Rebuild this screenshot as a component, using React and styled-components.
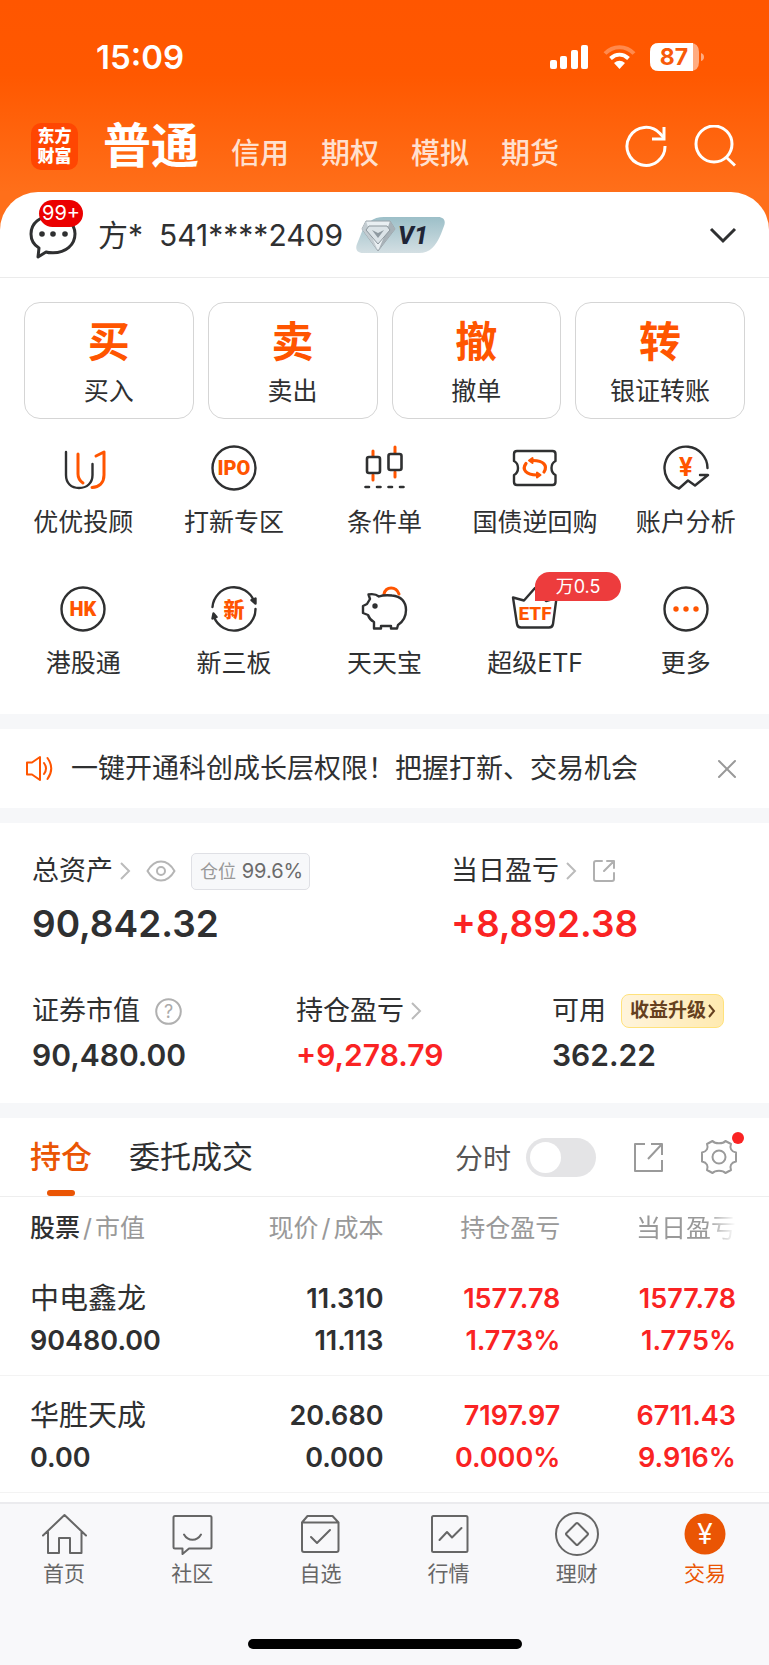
import React, { useState } from 'react'
import styled, { createGlobalStyle } from 'styled-components'

const GlobalStyle = createGlobalStyle`
  * {
    box-sizing: border-box;
  }
  body {
    margin: 0;
    background: #fff;
    font-family: Inter, "Noto Sans CJK SC", sans-serif;
    color: #2f3031;
  }
  button {
    font: inherit;
    color: inherit;
    border: none;
    background: none;
    padding: 0;
    cursor: pointer;
  }
  a {
    color: inherit;
    text-decoration: none;
  }
  svg {
    display: block;
    flex: none;
  }
`

const Page = styled.div`
  min-height: 100vh;
  display: flex;
  flex-direction: column;
  background: linear-gradient(#ff5600 0, #ff5800 75px, #ff6f1a 192px) top / 100% 240px no-repeat, #fff;
`

/* status bar */

const StatusBar = styled.div`
  display: flex;
  align-items: center;
  justify-content: space-between;
  padding: 40px 65px 0 96px;
  color: #fff;
`

const Clock = styled.span`
  font-size: 33px;
  line-height: 34px;
  font-weight: 600;
`

const StatusIcons = styled.div`
  display: flex;
  align-items: center;
  gap: 14px;
`

/* top navigation */

const TopBar = styled.header`
  display: flex;
  align-items: center;
  padding: 46px 33px 20px 31px;
  color: #fff;
`

const Logo = styled.div`
  width: 47px;
  height: 47px;
  border-radius: 10px;
  background: #ff4602;
  display: flex;
  flex-direction: column;
  align-items: center;
  justify-content: center;
  font-size: 17px;
  line-height: 20px;
  font-weight: 900;
`

const Markets = styled.nav`
  flex: 1;
  display: flex;
  align-items: flex-end;
  gap: 32px;
  margin-left: 25px;
`

const Market = styled.button`
  font-size: ${(p) => (p.$active ? '48px' : '29px')};
  line-height: ${(p) => (p.$active ? '52px' : '36px')};
  font-weight: ${(p) => (p.$active ? 700 : 500)};
  color: ${(p) => (p.$active ? '#fff' : '#ffe0cf')};
`

const TopActions = styled.div`
  display: flex;
  gap: 27px;
`

/* white sheet */

const Sheet = styled.main`
  flex: 1;
  display: flex;
  flex-direction: column;
  background: #fff;
  border-radius: 38px 38px 0 0;
`

const Account = styled.div`
  display: flex;
  align-items: center;
  padding: 18px 32px 17px 28px;
  border-bottom: 1px solid #ebebeb;
  font-size: 30px;
  line-height: 50px;

  .id {
    margin: 0 13px 0 16px;
  }
  .fold {
    margin-left: auto;
  }
`

const Messages = styled.button`
  position: relative;
  margin-right: 20px;
`

const Count = styled.span`
  position: absolute;
  left: 11px;
  top: -10px;
  padding: 0 3px;
  border-radius: 14px;
  background: #eb0000;
  color: #fff;
  font-size: 20px;
  line-height: 27px;
`

const Trades = styled.div`
  display: grid;
  grid-template-columns: repeat(4, 1fr);
  gap: 14px;
  padding: 24px 24px 0;
`

const Trade = styled.button`
  border: 1px solid #d5d5d5;
  border-radius: 16px;
  padding: 16px 0 11px;
  font-size: 25px;
  line-height: 32px;

  b {
    display: block;
    margin-bottom: 10px;
    font-size: 42px;
    line-height: 46px;
    font-weight: 700;
    color: #ff5500;
  }
`

const Services = styled.div`
  display: grid;
  grid-template-columns: repeat(5, 1fr);
  row-gap: 48px;
  padding: 25px 8px 36px;
`

const Service = styled.a`
  display: flex;
  flex-direction: column;
  align-items: center;
  gap: 15px;
  font-size: 25px;
  line-height: 30px;
  white-space: nowrap;
`

const IconBox = styled.span`
  position: relative;
`

const Promo = styled.span`
  position: absolute;
  left: 24px;
  top: -13px;
  width: 86px;
  border-radius: 15px 15px 15px 0;
  background: #ed3c3d;
  color: #fff;
  font-size: 18px;
  line-height: 29px;
  text-align: center;
`

const Band = styled.div`
  height: 15px;
  background: #f6f7f9;
`

const Notice = styled.div`
  display: flex;
  align-items: center;
  gap: 17px;
  padding: 0 32px 0 25px;
  font-size: 27px;
  line-height: 79px;

  button {
    margin-left: auto;
  }
`

/* assets */

const Assets = styled.section`
  padding: 29px 32px 31px;
`

const AssetRow = styled.div`
  display: grid;
  grid-template-columns: ${(p) => p.$columns};

  & + & {
    margin-top: 46px;
  }
`

const AssetLabel = styled.div`
  display: flex;
  align-items: center;
  gap: 15px;
  font-size: 27px;
  line-height: 38px;
  white-space: nowrap;
`

const AssetLink = styled.a`
  display: flex;
  align-items: center;
  gap: 6px;
`

const Amount = styled.div`
  margin-top: ${(p) => (p.$large ? 12 : 8)}px;
  font-size: ${(p) => (p.$large ? 37 : 30)}px;
  line-height: ${(p) => (p.$large ? 44 : 34)}px;
  font-weight: 600;
  color: ${(p) => (p.$up ? '#fa2323' : '#2f3031')};
`

const Ratio = styled.span`
  padding: 0 6px 0 8px;
  border: 1px solid #dfe0e5;
  border-radius: 5px;
  background: #f7f8fa;
  font-size: 20px;
  line-height: 34px;
  color: #6b6b6b;

  span {
    font-size: 18px;
    color: #999;
  }
`

const Upgrade = styled.button`
  padding: 0 7px 0 8px;
  display: flex;
  align-items: center;
  gap: 2px;
  border: 1px solid #ffe27c;
  border-radius: 8px;
  background: linear-gradient(90deg, #fff4dc, #ffeab0);
  color: #65401f;
  font-size: 19px;
  line-height: 32px;
  font-weight: 700;
`

/* positions */

const Tabs = styled.div`
  display: flex;
  align-items: center;
  padding: 0 32px 0 30px;
  border-bottom: 1px solid #eee;
`

const Tab = styled.button`
  position: relative;
  margin-right: 37px;
  font-size: 31px;
  line-height: 78px;
  font-weight: ${(p) => (p.$active ? 500 : 400)};
  color: ${(p) => (p.$active ? '#ea5504' : '#2f3031')};

  &::after {
    content: '';
    display: ${(p) => (p.$active ? 'block' : 'none')};
    position: absolute;
    left: calc(50% - 14px);
    bottom: 0;
    width: 28px;
    height: 6px;
    border-radius: 3px;
    background: #ea5504;
  }
`

const Toggle = styled.label`
  display: flex;
  align-items: center;
  gap: 15px;
  margin-left: auto;
  font-size: 28px;
  color: #555;

  input {
    appearance: none;
    display: flex;
    align-items: center;
    margin: 0;
    padding: 0 4px;
    width: 70px;
    height: 39px;
    border-radius: 20px;
    background: #e4e4e6;
    cursor: pointer;
  }
  input::before {
    content: '';
    width: 31px;
    height: 31px;
    border-radius: 50%;
    background: #fff;
  }
  input:checked {
    justify-content: flex-end;
    background: #ea5504;
  }
`

const ToolButton = styled.button`
  position: relative;
  margin-left: 37px;
`

const Dot = styled.i`
  position: absolute;
  right: -7px;
  top: -7px;
  width: 12px;
  height: 12px;
  border-radius: 50%;
  background: #fa2323;
`

const Positions = styled.table`
  width: 100%;
  table-layout: fixed;
  border-collapse: separate;
  border-spacing: 0;
  text-align: right;

  th {
    height: 62px;
    padding: 0 1px 0 0;
    font-size: 25px;
    line-height: 30px;
    font-weight: 400;
    color: #999;
    white-space: nowrap;
  }
  th b {
    font-weight: 500;
    color: #2f3031;
  }
  th i {
    margin: 0 3px;
    font-style: normal;
  }
  td {
    padding: 19px 1px 13px 0;
    border-bottom: 1px solid #f3f3f3;
    font-size: 27px;
    line-height: 42px;
    font-weight: 600;
  }
  th:first-child,
  td:first-child {
    width: 28%;
    padding-left: 30px;
    text-align: left;
  }
  th:nth-child(2) {
    width: 22%;
  }
  th:nth-child(3) {
    width: 23%;
  }
  th:last-child,
  td:last-child {
    width: 27%;
    padding-right: 33px;
  }
`

const Faded = styled.span`
  mask-image: linear-gradient(90deg, #000 70%, transparent);
`

const StockName = styled.a`
  display: block;
  font-size: 29px;
  font-weight: 400;
`

const Figure = styled.div`
  color: ${(p) => (p.$up ? '#fa2323' : '#2f3031')};
`

/* bottom bar */

const BottomBar = styled.footer`
  border-top: 2px solid #ebebee;
  background: #f8f8fa;
  padding: 6px 0 16px;
`

const BottomNav = styled.nav`
  display: grid;
  grid-template-columns: repeat(6, 1fr);
`

const BottomLink = styled.a`
  display: flex;
  flex-direction: column;
  align-items: center;
  gap: 2px;
  font-size: 21px;
  line-height: 28px;
  color: ${(p) => (p.$active ? '#ea5504' : '#666')};
`

const HomeIndicator = styled.div`
  width: 274px;
  height: 10px;
  margin: 51px auto 0;
  border-radius: 5px;
  background: #000;
`

/* icons */

const ORANGE = '#ff5500'
const DARK = '#2f3031'

const Icon = ({ size = 48, color = DARK, width = 2, children, ...rest }) => (
  <svg
    width={size}
    height={size}
    viewBox={`0 0 ${size} ${size}`}
    fill="none"
    stroke={color}
    strokeWidth={width}
    strokeLinecap="round"
    strokeLinejoin="round"
    aria-hidden="true"
    {...rest}
  >
    {children}
  </svg>
)

const IconText = ({ size, y, children, fill = ORANGE, weight = 900, family = 'Roboto' }) => (
  <text
    x="24"
    y={y}
    textAnchor="middle"
    fontFamily={`${family}, "Noto Sans CJK SC", sans-serif`}
    fontSize={size}
    fontWeight={weight}
    fill={fill}
    stroke="none"
  >
    {children}
  </text>
)

const Signal = () => (
  <svg width="39" height="26" viewBox="0 0 39 26" fill="#fff" aria-hidden="true">
    <rect x="0" y="16" width="7" height="9" rx="2" />
    <rect x="10" y="12" width="7" height="13" rx="2" />
    <rect x="21" y="6" width="7" height="19" rx="2" />
    <rect x="31" y="1" width="7" height="24" rx="2" />
  </svg>
)

const Wifi = () => (
  <svg width="33" height="26" viewBox="0 0 33 26" fill="none" stroke="#fff" strokeWidth="4" aria-hidden="true">
    <path d="M2 9.500C10 1 23 1 31 9.500" opacity=".3" />
    <path d="M7.500 14.500C13 9.500 20 9.500 25.500 14.500" />
    <path d="M11 19Q16.500 14.500 22 19L16.500 25Z" fill="#fff" stroke="none" />
  </svg>
)

const Battery = () => (
  <svg width="54" height="28" viewBox="0 0 54 28" aria-hidden="true">
    <path d="M9 0h31q9 0 9 9v10q0 9-9 9H9q-9 0-9-9V9q0-9 9-9z" fill="#fff" opacity=".5" />
    <path d="M9 0h34v28H9q-9 0-9-9V9q0-9 9-9z" fill="#fff" />
    <path d="M51 10q3 1 3 4t-3 4z" fill="#fff" opacity=".5" />
    <text x="24" y="22" textAnchor="middle" fontFamily="Inter, sans-serif" fontSize="23" fontWeight="700" fill="#f85a08">
      87
    </text>
  </svg>
)

const RefreshIcon = () => (
  <Icon size={42} color="#fff" width={3} strokeLinecap="butt" strokeLinejoin="miter">
    <path d="M40 21A19 19 0 1 1 35 8.500L39 13" />
    <path d="M39 2v12H27" />
  </Icon>
)

const SearchIcon = () => (
  <Icon size={42} color="#fff" width={3} strokeLinecap="butt">
    <circle cx="20" cy="19" r="18" />
    <path d="M32 32l9 8.500" />
  </Icon>
)

const BubbleIcon = () => (
  <Icon size={50} width={3}>
    <path d="M24.500 6C12 6 3 13 3 24c0 7 3 11 8 14l-1 9 8-5c2 .8 4 .8 7 .8 13 0 22-8 22-19C47 13 37 6 24.500 6z" />
    <g fill={DARK} stroke="none">
      <circle cx="14" cy="24" r="2.800" />
      <circle cx="25" cy="24" r="2.800" />
      <circle cx="37" cy="24" r="2.800" />
    </g>
  </Icon>
)

const VipBadge = () => (
  <svg width="90" height="38" viewBox="0 0 90 38" aria-label="V1">
    <defs>
      <linearGradient id="vip" x1="0" y1="0" x2="0" y2="1">
        <stop offset="0" stopColor="#9cbfc8" />
        <stop offset="1" stopColor="#d3dfe3" />
      </linearGradient>
    </defs>
    <path d="M28 1h54c6 0 8 4 6 9l-3 8c-5 12-11 19-22 19H7c-6 0-8-4-6-9l4-10C9 7 17 1 28 1z" fill="url(#vip)" />
    <path d="M10 5h24l5 8-17 22L6 13z" fill="#e9eff2" stroke="#98a2a8" strokeWidth="1" />
    <path d="M10 5l3 9 9 21L6 13z" fill="#c3ccd1" />
    <path d="M34 5l-3 9-9 21 17-22z" fill="#a7b1b7" />
    <path d="M13 10h18l3 4-12 14-12-14z" fill="#dbe3e7" stroke="#8d979d" strokeWidth="1" />
    <path d="M16 14l6 3 6-3-6 8z" fill="#8f9aa1" />
    <text x="42" y="28" fontFamily="Roboto, sans-serif" fontSize="25" fontWeight="800" fontStyle="italic" fill="#1f2536">
      V1
    </text>
  </svg>
)

const AdvisorIcon = () => (
  <Icon width={2.4}>
    <path d="M7 8v23c0 8 5 13 13 13s13.500-5 13.500-13V20" />
    <g stroke={ORANGE} strokeWidth="3">
      <path d="M19 10v20c0 4 2 7 5 9" />
      <path d="M37 12l8-4v23c0 8-5 12-12 12.500" />
    </g>
  </Icon>
)

const IpoIcon = () => (
  <Icon width={2.4}>
    <circle cx="24" cy="24" r="21.500" />
    <IconText size={20} y={31}>IPO</IconText>
  </Icon>
)

const CandleIcon = () => (
  <Icon width={2.6}>
    <g stroke={ORANGE} strokeWidth="3">
      <path d="M13 7v5M13 31v5M35 3v6M35 28v5" />
    </g>
    <rect x="7" y="13" width="13" height="16" rx="2" />
    <rect x="28.500" y="10" width="13" height="16" rx="2" />
    <path d="M5.500 43h3.500M17 43h3.500M28.500 43h3.500M40 43h3.500" />
  </Icon>
)

const RepoIcon = () => (
  <Icon width={2.4}>
    <path d="M6 7h35.500q3 0 3 3v7q-4 2-4 7t4 7v7q0 3-3 3H6q-3 0-3-3v-7q4-2 4-7t-4-7v-7q0-3 3-3z" />
    <g stroke={ORANGE} strokeWidth="3.200">
      <path d="M15 19.500c-4.500 6 0 11.500 11 11.500" />
      <path d="M33 28c4-6.500-.5-11.500-11-11.500" />
      <path d="M26 28.500v5l3.500-2.500zM21.500 14v5L18 16.500z" fill={ORANGE} strokeWidth="2" />
    </g>
  </Icon>
)

const AnalysisIcon = () => (
  <Icon width={2.4}>
    <path d="M45.500 24A21.500 21.500 0 1 0 17 44.500l9-8 7 5L46 31h-8" />
    <IconText size={25} y={32} weight={700} family="Inter">¥</IconText>
  </Icon>
)

const HkIcon = () => (
  <Icon width={2.4}>
    <circle cx="24" cy="24" r="21.500" />
    <IconText size={20} y={31}>HK</IconText>
  </Icon>
)

const NewBoardIcon = () => (
  <Icon width={2.4}>
    <path d="M2.500 22A21.500 21.500 0 0 1 44 16" />
    <path d="M45.500 24A21.500 21.500 0 0 1 4 32" />
    <path d="M41.500 15l4-1.500v5zM6.500 32l-4 1.500 1-5z" fill={DARK} />
    <IconText size={21} y={32}>新</IconText>
  </Icon>
)

const PiggyIcon = () => (
  <Icon width={2.4}>
    <path d="M24 9c2-8 12-8 15 0" stroke={ORANGE} strokeWidth="3" />
    <path d="M8.500 9.500c5-1 8 0 10.500 2 4-1.500 9-1.500 13-1C41 11 46 17 46 25c0 7-3.500 12-8 15l-1 3.500h-6V41H21v2.500h-7V37c-3-1.500-5-4-6-7l-5-2v-7l4-2 3-5z" />
    <circle cx="15" cy="21" r="2.700" fill={DARK} stroke="none" />
  </Icon>
)

const EtfIcon = () => (
  <Icon width={2.4}>
    <path d="M2 12.500l11 3L24 3l11 13 10.500-3-3.500 26q-.5 3.500-4 3.500H10q-3.500 0-4-3.500z" />
    <IconText size={19} y={35} weight={800}>ETF</IconText>
  </Icon>
)

const MoreIcon = () => (
  <Icon width={2.4}>
    <circle cx="24" cy="24" r="21.500" />
    <g fill={ORANGE} stroke="none">
      <circle cx="14" cy="24" r="2.700" />
      <circle cx="24" cy="24" r="2.700" />
      <circle cx="34" cy="24" r="2.700" />
    </g>
  </Icon>
)

const SpeakerIcon = () => (
  <Icon size={29} color={ORANGE}>
    <path d="M2 8.500h5l8-5.500v23l-8-5.500H2z" />
    <path d="M19 9q4 5.500 0 11M22.500 4q7.500 10.500 0 21" />
  </Icon>
)

const CloseIcon = () => (
  <Icon size={20} color="#999">
    <path d="M2 2l16 16M18 2L2 18" />
  </Icon>
)

const Arrow = () => (
  <svg width="12" height="18" viewBox="0 0 12 18" fill="none" stroke="#bbb" strokeWidth="2" aria-hidden="true">
    <path d="M2 1l8 8-8 8" />
  </svg>
)

const EyeIcon = () => (
  <Icon size={30} color="#b5b5b5">
    <path d="M1.500 15Q7 5.500 15 5.500T28.500 15Q23 24.500 15 24.500T1.500 15z" />
    <circle cx="15" cy="15" r="4" />
  </Icon>
)

const ShareIcon = () => (
  <Icon size={24} color="#b0b0b0">
    <path d="M10 2H4q-2 0-2 2v16q0 2 2 2h16q2 0 2-2v-6M15 2h7v7M21 3l-9 9" />
  </Icon>
)

const HelpIcon = () => (
  <Icon size={27} color="#b0b0b0">
    <circle cx="13.500" cy="13.500" r="12.300" />
    <text x="13.500" y="20" textAnchor="middle" fontFamily="Inter, sans-serif" fontSize="18" fill="#aaa" stroke="none">
      ?
    </text>
  </Icon>
)

const ExpandIcon = () => (
  <Icon size={31} color="#9a9a9a" strokeLinecap="butt">
    <path d="M12 2H2v27h27V18M18 2h11v11M29 2L15 17" />
  </Icon>
)

const GearIcon = () => (
  <Icon size={36} color="#9a9a9a">
    <path d="M11.500 2C14 5 22 5 24.500 2L30 5c-1.500 4 0 7.500 5 8.500v9c-5 1-6.500 4.500-5 8.500l-5.500 3c-2.500-3-10.500-3-13 0L6 31c1.500-4 0-7.500-5-8.500v-9c5-1 6.500-4.500 5-8.500z" />
    <circle cx="18" cy="18" r="6.500" />
  </Icon>
)

const HomeIcon = () => (
  <Icon color="#666">
    <path d="M3 25.500L24.500 5 46 25.500M8 22v21h11V28h11v15h11.500V22" />
  </Icon>
)

const CommunityIcon = () => (
  <Icon color="#666">
    <path d="M7 6h35q1.500 0 1.500 1.500V37q0 1.500-1.500 1.500H21L14.500 44v-5.500H7q-1.500 0-1.500-1.500V7.500Q5.500 6 7 6z" />
    <path d="M16 24.500c4 7 13 7 17 0" />
  </Icon>
)

const WatchIcon = () => (
  <Icon color="#666">
    <path d="M6 12.500h36.500V40q0 2-2 2H8q-2 0-2-2zL11.500 6h25l6 6.500" />
    <path d="M15 27l6 6 13-13" />
  </Icon>
)

const QuotesIcon = () => (
  <Icon color="#666">
    <rect x="7" y="6" width="35.500" height="36" rx="1.500" />
    <path d="M14.500 30l7.500-8 5 5.500L36.500 18" />
  </Icon>
)

const WealthIcon = () => (
  <Icon color="#666">
    <circle cx="24" cy="24" r="21" />
    <path d="M23 13.500q1-1 2 0L34.500 23q1 1 0 2L25 34.500q-1 1-2 0L13.500 25q-1-1 0-2z" />
  </Icon>
)

const TradeIcon = () => (
  <Icon>
    <circle cx="24" cy="24" r="20.500" fill="#ea5504" stroke="none" />
    <IconText size={28} y={34} fill="#fff" weight={400} family="Inter">¥</IconText>
  </Icon>
)

/* data */

const trades = [
  { mark: '买', label: '买入' },
  { mark: '卖', label: '卖出' },
  { mark: '撤', label: '撤单' },
  { mark: '转', label: '银证转账' },
]

const services = [
  { label: '优优投顾', icon: AdvisorIcon },
  { label: '打新专区', icon: IpoIcon },
  { label: '条件单', icon: CandleIcon },
  { label: '国债逆回购', icon: RepoIcon },
  { label: '账户分析', icon: AnalysisIcon },
  { label: '港股通', icon: HkIcon },
  { label: '新三板', icon: NewBoardIcon },
  { label: '天天宝', icon: PiggyIcon },
  { label: '超级ETF', icon: EtfIcon, promo: '万0.5' },
  { label: '更多', icon: MoreIcon },
]

const positions = [
  { name: '中电鑫龙', value: '90480.00', price: '11.310', cost: '11.113', total: ['1577.78', '1.773%'], day: ['1577.78', '1.775%'] },
  { name: '华胜天成', value: '0.00', price: '20.680', cost: '0.000', total: ['7197.97', '0.000%'], day: ['6711.43', '9.916%'] },
]

const links = [
  { label: '首页', icon: HomeIcon },
  { label: '社区', icon: CommunityIcon },
  { label: '自选', icon: WatchIcon },
  { label: '行情', icon: QuotesIcon },
  { label: '理财', icon: WealthIcon },
  { label: '交易', icon: TradeIcon },
]

const App = () => {
  const [market, setMarket] = useState('普通')
  const [tab, setTab] = useState('持仓')
  const [minute, setMinute] = useState(false)

  return (
    <Page>
      <GlobalStyle />
      <StatusBar>
        <Clock>15:09</Clock>
        <StatusIcons>
          <Signal />
          <Wifi />
          <Battery />
        </StatusIcons>
      </StatusBar>

      <TopBar>
        <Logo>
          <span>东方</span>
          <span>财富</span>
        </Logo>
        <Markets>
          {['普通', '信用', '期权', '模拟', '期货'].map((m) => (
            <Market key={m} $active={m === market} onClick={() => setMarket(m)}>
              {m}
            </Market>
          ))}
        </Markets>
        <TopActions>
          <button aria-label="刷新"><RefreshIcon /></button>
          <button aria-label="搜索"><SearchIcon /></button>
        </TopActions>
      </TopBar>

      <Sheet>
        <Account>
          <Messages aria-label="消息">
            <BubbleIcon />
            <Count>99+</Count>
          </Messages>
          <span>方*</span>
          <span className="id">541****2409</span>
          <VipBadge />
          <button className="fold" aria-label="切换账户">
            <Icon size={28} width={3} strokeLinecap="butt" strokeLinejoin="miter">
              <path d="M2 8l12 12L26 8" />
            </Icon>
          </button>
        </Account>

        <Trades>
          {trades.map((t) => (
            <Trade key={t.label}>
              <b>{t.mark}</b>
              {t.label}
            </Trade>
          ))}
        </Trades>

        <Services>
          {services.map(({ label, icon: ServiceIcon, promo }) => (
            <Service key={label} href="#">
              <IconBox>
                <ServiceIcon />
                {promo && <Promo>{promo}</Promo>}
              </IconBox>
              {label}
            </Service>
          ))}
        </Services>

        <Band />

        <Notice>
          <SpeakerIcon />
          <span>一键开通科创成长层权限！把握打新、交易机会</span>
          <button aria-label="关闭"><CloseIcon /></button>
        </Notice>

        <Band />

        <Assets>
          <AssetRow $columns="419fr 286fr">
            <div>
              <AssetLabel>
                <AssetLink href="#">总资产 <Arrow /></AssetLink>
                <EyeIcon />
                <Ratio><span>仓位</span> 99.6%</Ratio>
              </AssetLabel>
              <Amount $large>90,842.32</Amount>
            </div>
            <div>
              <AssetLabel>
                <AssetLink href="#">当日盈亏 <Arrow /></AssetLink>
                <ShareIcon />
              </AssetLabel>
              <Amount $large $up>+8,892.38</Amount>
            </div>
          </AssetRow>
          <AssetRow $columns="264fr 256fr 185fr">
            <div>
              <AssetLabel>
                证券市值 <HelpIcon />
              </AssetLabel>
              <Amount>90,480.00</Amount>
            </div>
            <div>
              <AssetLabel>
                <AssetLink href="#">持仓盈亏 <Arrow /></AssetLink>
              </AssetLabel>
              <Amount $up>+9,278.79</Amount>
            </div>
            <div>
              <AssetLabel>
                可用
                <Upgrade>
                  收益升级
                  <svg width="8" height="14" viewBox="0 0 8 14" fill="none" stroke="#65401f" strokeWidth="2">
                    <path d="M1 1l5 6-5 6" />
                  </svg>
                </Upgrade>
              </AssetLabel>
              <Amount>362.22</Amount>
            </div>
          </AssetRow>
        </Assets>

        <Band />

        <Tabs>
          {['持仓', '委托成交'].map((t) => (
            <Tab key={t} $active={t === tab} onClick={() => setTab(t)}>
              {t}
            </Tab>
          ))}
          <Toggle>
            分时
            <input type="checkbox" checked={minute} onChange={(e) => setMinute(e.target.checked)} />
          </Toggle>
          <ToolButton aria-label="展开"><ExpandIcon /></ToolButton>
          <ToolButton aria-label="设置">
            <GearIcon />
            <Dot />
          </ToolButton>
        </Tabs>

        <Positions>
          <thead>
            <tr>
              <th><b>股票</b><i>/</i>市值</th>
              <th>现价<i>/</i>成本</th>
              <th>持仓盈亏</th>
              <th><Faded>当日盈亏</Faded></th>
            </tr>
          </thead>
          <tbody>
            {positions.map((p) => (
              <tr key={p.name}>
                <td>
                  <StockName href="#">{p.name}</StockName>
                  <Figure>{p.value}</Figure>
                </td>
                <td>
                  <Figure>{p.price}</Figure>
                  <Figure>{p.cost}</Figure>
                </td>
                {[p.total, p.day].map(([amount, rate], i) => (
                  <td key={i}>
                    <Figure $up>{amount}</Figure>
                    <Figure $up>{rate}</Figure>
                  </td>
                ))}
              </tr>
            ))}
          </tbody>
        </Positions>
      </Sheet>

      <BottomBar>
        <BottomNav>
          {links.map(({ label, icon: LinkIcon }) => (
            <BottomLink key={label} href="#" $active={label === '交易'}>
              <LinkIcon />
              {label}
            </BottomLink>
          ))}
        </BottomNav>
        <HomeIndicator />
      </BottomBar>
    </Page>
  )
}

export default App
